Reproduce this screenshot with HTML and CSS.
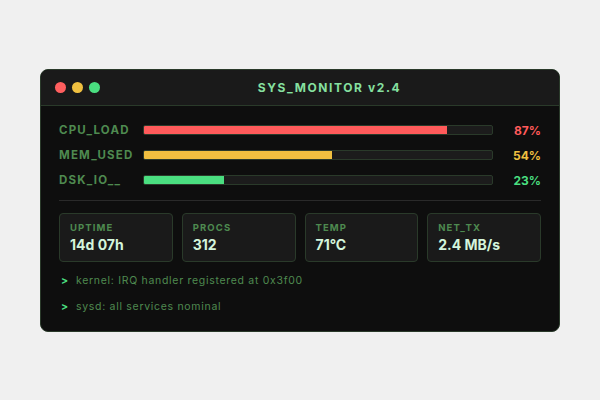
FILE: index.html
```html
<!DOCTYPE html>
<html lang="en">
<head>
  <meta charset="UTF-8">
  <title>sys_monitor</title>
  <link rel="stylesheet" href="styles.css">
</head>
<body>
  <div class="window">
    <div class="titlebar">
      <div class="dots">
        <span class="dot red"></span>
        <span class="dot yellow"></span>
        <span class="dot green"></span>
      </div>
      <div class="title">SYS_MONITOR v2.4</div>
    </div>
    <div class="content">
      <div class="meters">
        <div class="meter">
          <div class="label">CPU_LOAD</div>
          <div class="track"><div class="fill red" style="width: 87%"></div></div>
          <div class="pct red-text">87%</div>
        </div>
        <div class="meter">
          <div class="label">MEM_USED</div>
          <div class="track"><div class="fill yellow" style="width: 54%"></div></div>
          <div class="pct yellow-text">54%</div>
        </div>
        <div class="meter">
          <div class="label">DSK_IO__</div>
          <div class="track"><div class="fill green" style="width: 23%"></div></div>
          <div class="pct green-text">23%</div>
        </div>
      </div>
      <div class="cards">
        <div class="card"><div class="card-label">UPTIME</div><div class="card-value">14d 07h</div></div>
        <div class="card"><div class="card-label">PROCS</div><div class="card-value">312</div></div>
        <div class="card"><div class="card-label">TEMP</div><div class="card-value">71°C</div></div>
        <div class="card"><div class="card-label">NET_TX</div><div class="card-value">2.4 MB/s</div></div>
      </div>
      <div class="log">
        <div class="line"><span class="prompt">&gt;</span>kernel: IRQ handler registered at 0x3f00</div>
        <div class="line"><span class="prompt">&gt;</span>sysd: all services nominal</div>
      </div>
    </div>
  </div>
</body>
</html>
```

FILE: styles.css
```css
body {
  margin: 0;
  background-color: #f0f0f0;
  font-family: Inter, "Noto Sans", sans-serif;
  height: 400px;
  display: flex;
  align-items: flex-start;
  justify-content: center;
}

.window {
  margin-top: 69px;
  width: 518px;
  background-color: #0e0e0e;
  border: 1px solid #2a3a2a;
  border-radius: 8px;
  overflow: hidden;
}

.titlebar {
  height: 35px;
  background-color: #1a1a1a;
  border-bottom: 1px solid #2a3a2a;
  display: flex;
  align-items: center;
  padding-left: 14px;
}

.dots {
  display: flex;
  gap: 6px;
}

.dot {
  width: 11px;
  height: 11px;
  border-radius: 50%;
}

.dot.red { background-color: #ff5f5f; }
.dot.yellow { background-color: #f0c040; }
.dot.green { background-color: #4ade80; }

.title {
  flex: 1;
  text-align: center;
  font-size: 12px;
  font-weight: 700;
  letter-spacing: 1.6px;
  color: #86e0a0;
}

.content {
  padding: 17px 18px 17px;
}

.meters {
  display: flex;
  flex-direction: column;
  gap: 11px;
  padding-bottom: 13px;
  border-bottom: 1px solid #2a2a2a;
}

.meter {
  display: flex;
  align-items: center;
  height: 14px;
}

.label {
  width: 84px;
  font-size: 11.5px;
  font-weight: 700;
  letter-spacing: 1.2px;
  color: #4e8a50;
}

.track {
  flex: 1;
  height: 8px;
  background-color: #1c1c1c;
  border: 1px solid #2a3a2a;
  border-radius: 2px;
  overflow: hidden;
}

.fill {
  height: 100%;
}

.fill.red { background-color: #ff5a5a; }
.fill.yellow { background-color: #f0c040; }
.fill.green { background-color: #4ade80; }

.pct {
  width: 48px;
  text-align: right;
  font-size: 12px;
  font-weight: 700;
}

.red-text { color: #ff5a5a; }
.yellow-text { color: #f0c040; }
.green-text { color: #4ade80; }

.cards {
  display: grid;
  grid-template-columns: repeat(4, 1fr);
  gap: 9px;
  margin-top: 12px;
}

.card {
  height: 35px;
  padding: 6px 10px;
  background-color: #1a1a1a;
  border: 1px solid #2a3a2a;
  border-radius: 4px;
}

.card-label {
  font-size: 9.5px;
  font-weight: 700;
  letter-spacing: 1.1px;
  color: #4e8a50;
  margin-top: 2px;
}

.card-value {
  font-size: 14px;
  font-weight: 700;
  color: #d4f5dc;
  margin-top: 3px;
}

.log {
  margin-top: 12px;
  display: flex;
  flex-direction: column;
  gap: 12px;
}

.line {
  font-size: 10.5px;
  letter-spacing: 0.7px;
  color: #4e8a50;
  line-height: 14px;
}

.prompt {
  display: inline-block;
  width: 17px;
  padding-left: 2px;
  box-sizing: border-box;
  color: #4ade80;
  font-weight: 700;
}
```
